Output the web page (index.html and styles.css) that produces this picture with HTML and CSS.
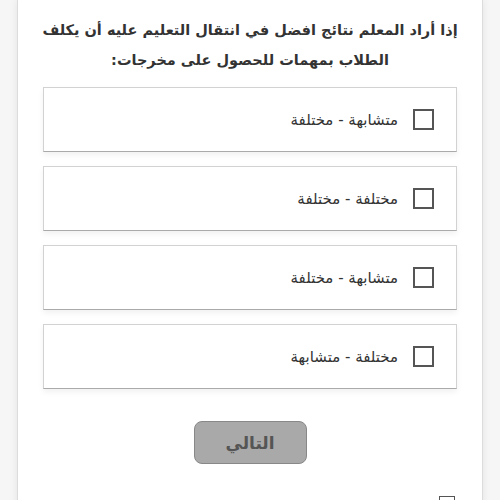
FILE: index.html
```html
<!DOCTYPE html>
<html lang="ar" dir="rtl">
<head>
    <meta charset="UTF-8">
    <meta name="viewport" content="width=device-width, initial-scale=1.0">
    <title>سؤال</title>
    <link rel="stylesheet" href="styles.css">
</head>
<body>
    <div class="card">
        <p class="question">إذا أراد المعلم نتائج افضل في انتقال التعليم عليه أن يكلف<br>الطلاب بمهمات للحصول على مخرجات:</p>
        <div class="options">
            <label class="option"><span class="box"></span><span>متشابهة - مختلفة</span></label>
            <label class="option"><span class="box"></span><span>مختلفة - مختلفة</span></label>
            <label class="option"><span class="box"></span><span>متشابهة - مختلفة</span></label>
            <label class="option"><span class="box"></span><span>مختلفة - متشابهة</span></label>
        </div>
        <div class="actions">
            <button class="next" disabled>التالي</button>
        </div>
        <div class="footer">
            <span class="mini"></span>
        </div>
    </div>
</body>
</html>
```

FILE: styles.css
```css
body {
    margin: 0;
    background: #f6f6f6;
    font-family: 'DejaVu Sans', sans-serif;
    overflow: hidden;
}
.card {
    background: white;
    margin: 0 17px;
    border-left: 1px solid #dcdcdc;
    border-right: 1px solid #dcdcdc;
    box-shadow: 0 0 8px rgba(0, 0, 0, 0.08);
    padding: 15px 25px 40px;
    min-height: 600px;
}
.question {
    margin: 0 -10px 12px;
    text-align: center;
    white-space: nowrap;
    font-size: 14.5px;
    font-weight: bold;
    line-height: 30px;
    color: #333;
}
.options {
    display: flex;
    flex-direction: column;
    gap: 14px;
}
.option {
    display: flex;
    align-items: center;
    gap: 15px;
    height: 63px;
    padding: 0 22px;
    border: 1px solid #d2d2d2;
    border-bottom-color: #aaa;
    box-shadow: 0 3px 6px rgba(0, 0, 0, 0.06);
    font-size: 15px;
    color: #333;
}
.box {
    width: 17px;
    height: 17px;
    border: 2px solid #555;
    flex-shrink: 0;
}
.actions {
    display: flex;
    justify-content: center;
    margin-top: 32px;
}
.next {
    width: 113px;
    height: 43px;
    background: #a9a9a9;
    border: 1px solid #888;
    border-radius: 8px;
    font-family: inherit;
    font-size: 17px;
    font-weight: bold;
    color: #555;
}
.footer {
    display: flex;
    margin-top: 32px;
    padding-right: 2px;
}
.mini {
    width: 14px;
    height: 14px;
    border: 1px solid #555;
}
```
